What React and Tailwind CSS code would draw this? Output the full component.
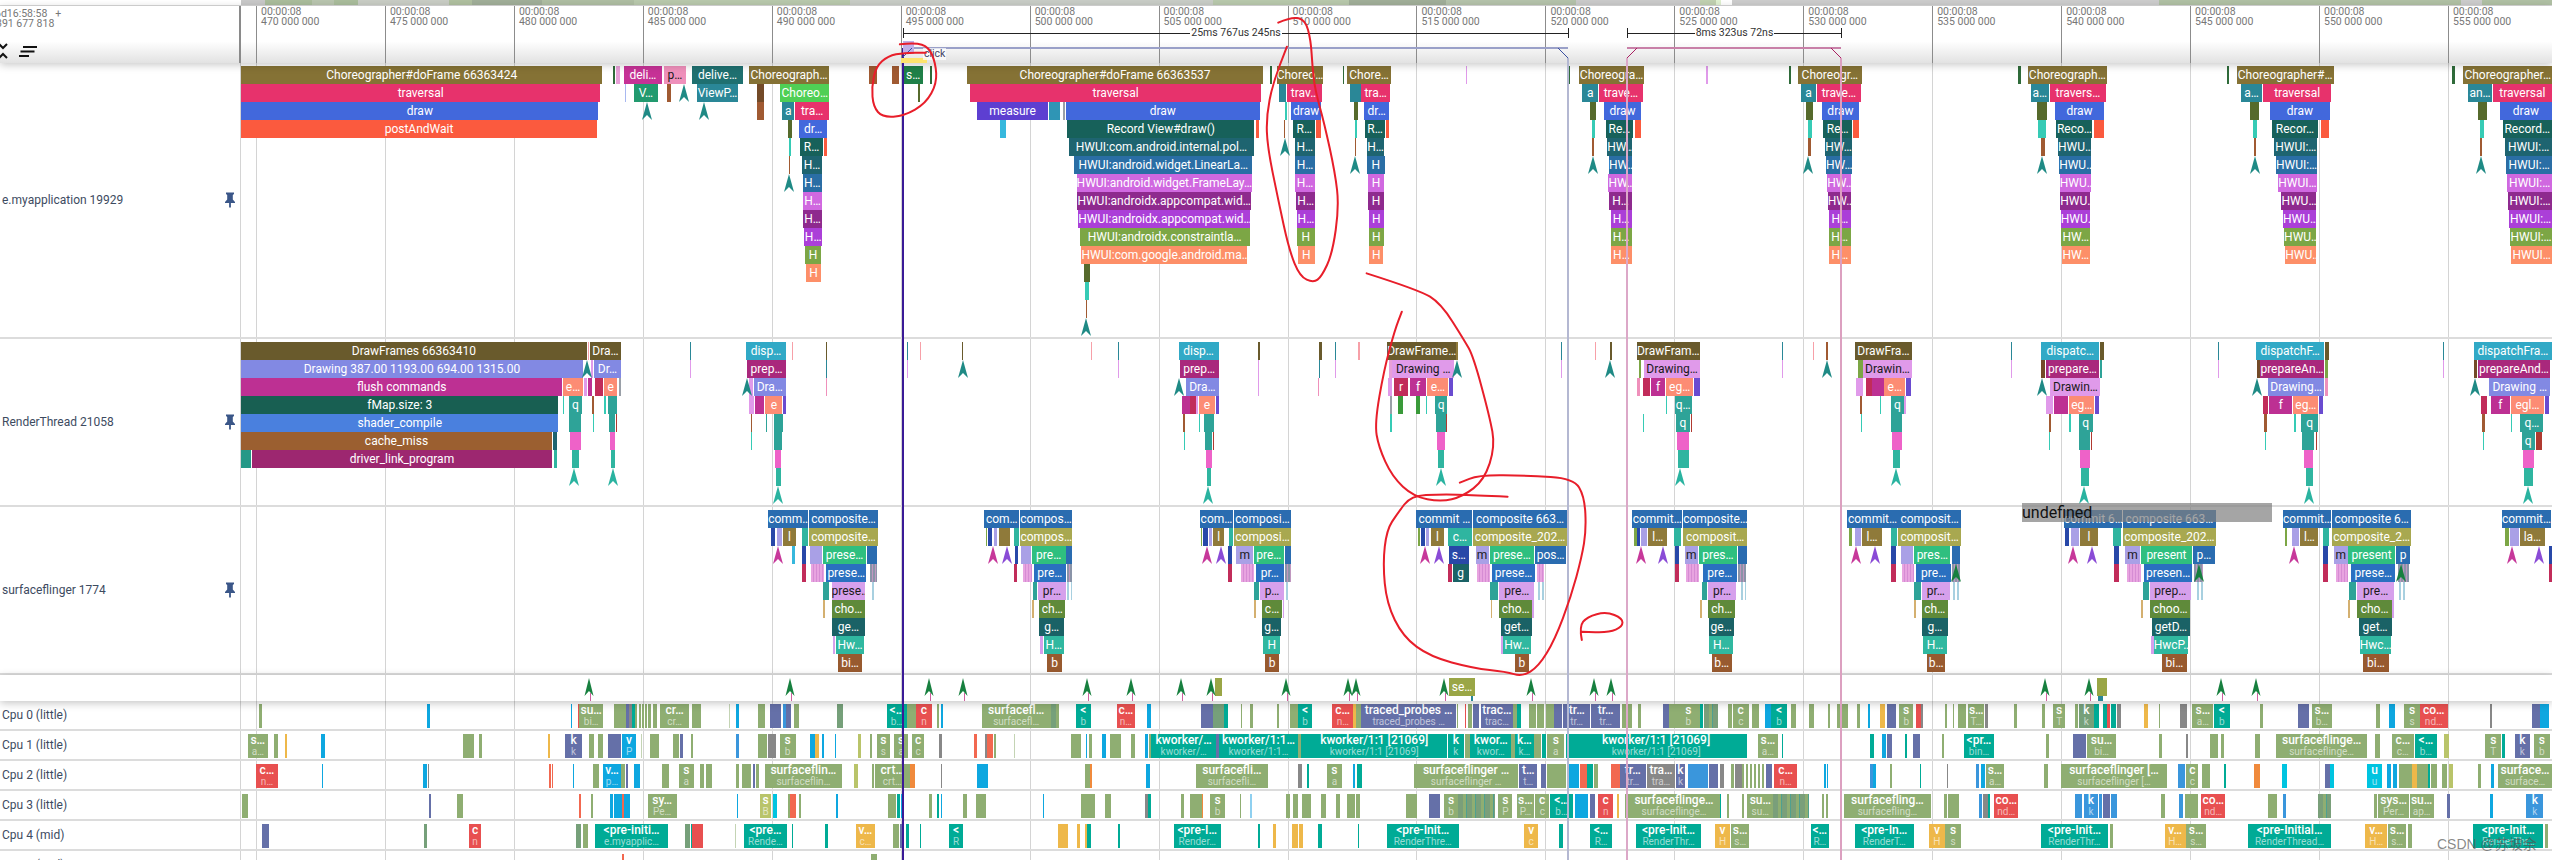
import React from 'react';

const X = (p, z) => {
  if (z > 1568 && p < 2) return X(p + 1, z - 1568);
  return p === 0 ? z / 1.8447 : p === 1 ? 850 + z / 1.8447 : 1700 + z / 1.8404;
};
const LEFT = 241;
const TIMES = [470, 475, 480, 485, 490, 495, 500, 505, 510, 515, 520, 525, 530, 535, 540, 545, 550, 555];

// slice colours
const OL = 'bg-[#857235]', CR = 'bg-[#e7326c]', BL = 'bg-[#4268dc]', OR = 'bg-[#fb5a3e]', GR = 'bg-[#4fcf55]';
const TE = 'bg-[#2a8797]', DT = 'bg-[#17615a]', H1 = 'bg-[#1e6470]', H2 = 'bg-[#2a6ea5]', H3 = 'bg-[#d068e0]';
const H4 = 'bg-[#8e2a8e]', H5 = 'bg-[#ab3fd8]', H6 = 'bg-[#7ca645]', H7 = 'bg-[#fd8f68]', DO = 'bg-[#566a2c]';
const TL = 'bg-[#36cbb5]', BR = 'bg-[#a05a32]', BD = 'bg-[#734a28]', MG = 'bg-[#c63296]', PK = 'bg-[#ef90bb]';
const TD = 'bg-[#1f7070]', VG = 'bg-[#229a6f]', DG = 'bg-[#2f6b3a]', LB = 'bg-[#a8b8f0]', LP = 'bg-[#e8a0d8]';
const PU = 'bg-[#5d3fd1]', SK = 'bg-[#36b8dd]', SG = 'bg-[#1f8048]';
const DF = 'bg-[#695a2c]', DR = 'bg-[#8289e3]', FL = 'bg-[#bd3093]', FM = 'bg-[#185f52]', SC = 'bg-[#4a80de]';
const CM = 'bg-[#9b5f30]', DL = 'bg-[#9d2770]', SA = 'bg-[#fc8c74]', QT = 'bg-[#2ea398]', CY = 'bg-[#31a9c6]';
const PR = 'bg-[#a9287c]', CS = 'bg-[#c12c5a]', LI = 'bg-[#e09aea]', PN = 'bg-[#ee62c8]', RD = 'bg-[#b03a30]';
const QB = 'bg-[#2fb5a0]', TN = 'bg-[#d4b070]', GN = 'bg-[#3a9a3a]', PP = 'bg-[#6a4bd0]', PT = 'bg-[#f7a0a8]';
const CO = 'bg-[#2a6cb0]', CA = 'bg-[#a8a850]', BO = 'bg-[#8f7a3a]', LV = 'bg-[#a9a0e6]', PG = 'bg-[#2fbf7f]';
const PB = 'bg-[#2a70c0]', PL = 'bg-[#d6a0ec]', CG = 'bg-[#5f8a3a]', GT = 'bg-[#1a6266]', HW = 'bg-[#30b8a0]';
const BB = 'bg-[#985a2f]', DB = 'bg-[#2848a8]', GA = 'bg-[#9aa0a8]';
const ST = 'bg-[repeating-linear-gradient(90deg,#e8a4e0_0,#e8a4e0_2px,#d68cd4_2px,#d68cd4_3px)]';
const SL = 'bg-[repeating-linear-gradient(90deg,#8a94a8_0,#8a94a8_2px,#c098c0_2px,#c098c0_3px)]';
const SB = 'bg-[repeating-linear-gradient(90deg,#a8d0e0_0,#a8d0e0_2px,#ffffff_2px,#ffffff_4px)]';
const SM = 'bg-[repeating-linear-gradient(90deg,#bd3093_0,#bd3093_8px,#c12c5a_8px,#c12c5a_14px,#e09aea_14px,#e09aea_16px)]';
const SW = 'bg-[repeating-linear-gradient(90deg,#8fae72_0,#8fae72_2px,#ffffff_2px,#ffffff_4px)]';
const SD = 'bg-[repeating-linear-gradient(90deg,#7a9f7a_0,#7a9f7a_5px,#8fae72_5px,#8fae72_8px,#4fa090_8px,#4fa090_9px)]';

const col = (p, rows) => rows.map(([row, a, b, c, t, d]) => ({ p, row, a, b, c, t, d }));

const APP = [
  ...col(0, [
    [0, 445, 1111, OL, 'Choreographer#doFrame 66363424'], [0, 1130, 1134, DG], [0, 1136, 1143, LP], [0, 1151, 1221, MG, 'deli…'], [0, 1224, 1266, PK, 'p…', 1], [0, 1277, 1370, TD, 'delive…'], [0, 1381, 1530, OL, 'Choreograph…'],
    [1, 445, 1107, CR, 'traversal'], [1, 1153, 1155, LB], [1, 1170, 1213, VG, 'V…'], [1, 1230, 1238, BR], [1, 1286, 1361, TE, 'ViewP…'], [1, 1396, 1410, BD], [1, 1439, 1530, GR, 'Choreo…'],
    [2, 445, 1104, BL, 'draw'], [2, 1396, 1409, BR], [2, 1443, 1465, TE, 'a'], [2, 1467, 1529, CR, 'tra…'],
    [3, 445, 1101, OR, 'postAndWait'], [3, 1453, 1461, DO], [3, 1474, 1526, BL, 'dr…'],
    [4, 1455, 1459, TL], [4, 1476, 1518, DT, 'R…'], [4, 1520, 1526, OR],
    [5, 1455, 1457, BR], [5, 1479, 1517, H1, 'H…'],
    [6, 1481, 1516, H2, 'H…'], [7, 1482, 1516, H3, 'H…'], [8, 1482, 1516, H4, 'H…'], [9, 1484, 1516, H5, 'H…'], [10, 1485, 1515, H6, 'H'], [11, 1486, 1515, H7, 'H'],
  ]),
  ...col(1, [
    [0, 35, 49, BR], [0, 78, 90, BR], [0, 99, 134, SG, 's…'], [0, 148, 151, DG], [0, 216, 762, OL, 'Choreographer#doFrame 66363537'], [0, 775, 778, DG], [0, 787, 873, OL, 'Choreo…'], [0, 909, 911, DG], [0, 917, 998, OL, 'Chore…'], [0, 1136, 1139, LI], [0, 1325, 1329, DG], [0, 1345, 1465, OL, 'Choreogra…'],
    [1, 126, 129, DO], [1, 222, 758, CR, 'traversal'], [1, 791, 805, TE], [1, 806, 871, CR, 'trav…'], [1, 922, 942, TE], [1, 943, 996, CR, 'tra…'], [1, 1351, 1380, TE, 'a'], [1, 1382, 1462, CR, 'trave…'],
    [2, 234, 366, PU, 'measure'], [2, 368, 387, 'bg-[#2f95b5]'], [2, 393, 397, GA], [2, 398, 756, BL, 'draw'], [2, 802, 806, TL], [2, 814, 869, BL, 'draw'], [2, 930, 938, DO], [2, 948, 995, BL, 'dr…'], [2, 1365, 1376, DO], [2, 1391, 1459, BL, 'draw'],
    [3, 276, 288, SK], [3, 401, 746, DT, 'Record View#draw()'], [3, 749, 755, OR], [3, 801, 803, BR], [3, 818, 858, DT, 'R…'], [3, 860, 869, OR], [3, 931, 936, TL], [3, 950, 987, DT, 'R…'], [3, 989, 994, OR], [3, 1368, 1374, TL], [3, 1394, 1445, DT, 'Re…'], [3, 1448, 1459, OR],
    [4, 404, 745, H1, 'HWUI:com.android.internal.pol…'], [4, 820, 858, H1, 'H…'], [4, 932, 934, BR], [4, 953, 986, H1, 'H…'], [4, 1369, 1372, BR], [4, 1397, 1443, H1, 'HW…'],
    [5, 414, 742, H2, 'HWUI:android.widget.LinearLa…'], [5, 821, 858, H2, 'H…'], [5, 954, 986, H2, 'H'], [5, 1400, 1442, H2, 'HW…'],
    [6, 418, 741, H3, 'HWUI:android.widget.FrameLay…'], [6, 821, 858, H3, 'H…'], [6, 955, 986, H3, 'H'], [6, 1399, 1442, H3, 'HW…'],
    [7, 419, 740, H4, 'HWUI:androidx.appcompat.wid…'], [7, 823, 858, H4, 'H…'], [7, 956, 985, H4, 'H'], [7, 1401, 1442, H4, 'H…'],
    [8, 421, 738, H5, 'HWUI:androidx.appcompat.wid…'], [8, 825, 857, H5, 'H…'], [8, 957, 985, H5, 'H'], [8, 1403, 1442, H5, 'H…'],
    [9, 424, 737, H6, 'HWUI:androidx.constraintla…'], [9, 825, 857, H6, 'H'], [9, 957, 985, H6, 'H'], [9, 1403, 1442, H6, 'H…'],
    [10, 427, 732, H7, 'HWUI:com.google.android.ma…'], [10, 826, 857, H7, 'H'], [10, 958, 984, H7, 'H'], [10, 1404, 1442, H7, 'H…'],
    [11, 432, 442, DO], [12, 434, 440, TL], [13, 435, 438, BR],
  ]),
  ...col(2, [
    [0, 11, 15, LI], [0, 163, 167, DG], [0, 180, 298, OL, 'Choreogr…'], [0, 585, 590, DG], [0, 603, 749, OL, 'Choreograph…'], [0, 970, 974, DG], [0, 988, 1166, OL, 'Choreographer#…'], [0, 1384, 1389, DG], [0, 1405, 1568, OL, 'Choreographer…'],
    [1, 186, 213, TE, 'a'], [1, 215, 296, CR, 'trave…'], [1, 609, 642, TE, 'a…'], [1, 644, 747, CR, 'travers…'], [1, 995, 1035, TE, 'a…'], [1, 1036, 1162, CR, 'traversal'], [1, 1413, 1458, TE, 'an…'], [1, 1459, 1568, CR, 'traversal'],
    [2, 196, 208, DO], [2, 224, 293, BL, 'draw'], [2, 620, 639, DO], [2, 653, 744, BL, 'draw'], [2, 1012, 1028, DO], [2, 1049, 1159, BL, 'draw'], [2, 1432, 1449, DO], [2, 1472, 1568, BL, 'draw'],
    [3, 198, 207, TL], [3, 227, 280, DT, 'Re…'], [3, 282, 293, OR], [3, 622, 637, TL], [3, 656, 722, DT, 'Reco…'], [3, 725, 743, OR], [3, 1017, 1025, TL], [3, 1053, 1137, DT, 'Recor…'], [3, 1142, 1158, OR], [3, 1435, 1443, TL], [3, 1477, 1568, DT, 'Record…'],
    [4, 199, 204, BR], [4, 230, 280, H1, 'HW…'], [4, 628, 635, BR], [4, 659, 720, H1, 'HWU…'], [4, 1019, 1023, BR], [4, 1057, 1136, H1, 'HWUI:…'], [4, 1436, 1440, BR], [4, 1482, 1568, H1, 'HWUI:…'],
    [5, 232, 279, H2, 'HW…'], [5, 661, 719, H2, 'HWU…'], [5, 1060, 1135, H2, 'HWUI:…'], [5, 1484, 1568, H2, 'HWUI:…'],
    [6, 234, 278, H3, 'HW…'], [6, 662, 719, H3, 'HWU…'], [6, 1064, 1135, H3, 'HWUI…'], [6, 1486, 1568, H3, 'HWUI:…'],
    [7, 235, 278, H4, 'HW…'], [7, 663, 718, H4, 'HWU…'], [7, 1070, 1134, H4, 'HWU…'], [7, 1487, 1568, H4, 'HWUI:…'],
    [8, 237, 278, H5, 'H…'], [8, 664, 718, H5, 'HWU…'], [8, 1073, 1134, H5, 'HWU…'], [8, 1489, 1568, H5, 'HWUI:…'],
    [9, 237, 277, H6, 'H…'], [9, 665, 718, H6, 'HW…'], [9, 1075, 1133, H6, 'HWU…'], [9, 1491, 1568, H6, 'HWUI:…'],
    [10, 238, 277, H7, 'H…'], [10, 666, 717, H7, 'HW…'], [10, 1077, 1133, H7, 'HWU…'], [10, 1493, 1568, H7, 'HWUI…'],
  ]),
];

const RT = [
  ...col(0, [
    [0, 445, 1082, DF, 'DrawFrames 66363410'], [0, 1084, 1087, PT], [0, 1089, 1145, DF, 'Dra…'], [0, 1272, 1274, TE], [0, 1376, 1450, CY, 'disp…'], [0, 1461, 1463, PT], [0, 1523, 1526, DF],
    [1, 445, 1075, DR, 'Drawing 387.00 1193.00 694.00 1315.00'], [1, 1090, 1094, LI], [1, 1096, 1145, DR, 'Dr…'], [1, 1272, 1274, LI], [1, 1378, 1450, PR, 'prep…'], [1, 1523, 1525, TE],
    [2, 445, 1037, FL, 'flush commands'], [2, 1039, 1075, SA, 'e…'], [2, 1078, 1082, LI], [2, 1085, 1092, FL], [2, 1098, 1113, CS], [2, 1115, 1138, SA, 'e'], [2, 1141, 1145, GA], [2, 1382, 1389, LI], [2, 1390, 1450, DR, 'Dra…'], [2, 1523, 1525, PK],
    [3, 445, 1030, FM, 'fMap.size: 3'], [3, 1038, 1040, TL], [3, 1050, 1073, QT, 'q'], [3, 1092, 1095, BR], [3, 1115, 1118, TL], [3, 1122, 1138, QT], [3, 1382, 1390, LI], [3, 1392, 1410, FL], [3, 1412, 1443, SA, 'e'], [3, 1445, 1450, PP],
    [4, 445, 1030, SC, 'shader_compile'], [4, 1050, 1072, QT], [4, 1093, 1095, TL], [4, 1124, 1135, QT], [4, 1136, 1138, RD], [4, 1385, 1388, BR], [4, 1413, 1415, QT], [4, 1427, 1444, QT],
    [5, 445, 1018, CM, 'cache_miss'], [5, 1020, 1028, H1], [5, 1052, 1071, PN], [5, 1125, 1135, PN], [5, 1386, 1388, TL], [5, 1428, 1442, QT],
    [6, 445, 463, 'bg-[#259887]'], [6, 465, 1018, DL, 'driver_link_program'], [6, 1022, 1028, QB], [6, 1055, 1069, QB], [6, 1127, 1134, QB], [6, 1430, 1441, PN],
    [7, 1431, 1440, QB],
  ]),
  ...col(1, [
    [0, 105, 107, TE], [0, 129, 131, PT], [0, 207, 209, DF], [0, 444, 445, PT], [0, 494, 496, TE], [0, 606, 680, CY, 'disp…'], [0, 752, 756, DF], [0, 865, 870, DF], [0, 895, 897, TE], [0, 938, 940, PT], [0, 991, 1117, DF, 'DrawFrame…'], [0, 1117, 1122, BO], [0, 1311, 1313, TE], [0, 1375, 1377, PT], [0, 1402, 1406, DF], [0, 1451, 1568, DF, 'DrawFram…'],
    [1, 105, 107, LI], [1, 495, 497, LI], [1, 608, 680, PR, 'prep…'], [1, 752, 754, LI], [1, 865, 867, TE], [1, 895, 897, LI], [1, 994, 1000, LP], [1, 1000, 1115, LI, 'Drawing …', 1], [1, 1312, 1314, LI], [1, 1455, 1460, H6], [1, 1465, 1568, LI, 'Drawing…', 1],
    [2, 620, 680, DR, 'Dra…'], [2, 752, 754, LI], [2, 864, 866, PK], [2, 993, 1000, LI], [2, 1003, 1030, CS, 'r'], [2, 1033, 1063, FL, 'f'], [2, 1065, 1104, SA, 'e…'], [2, 1105, 1113, PP], [2, 1452, 1457, PK], [2, 1462, 1475, CS], [2, 1477, 1504, FL, 'f'], [2, 1506, 1555, SA, 'eg…'], [2, 1557, 1568, PP],
    [3, 613, 642, SM], [3, 643, 674, SA, 'e'], [3, 675, 680, PP], [3, 996, 1000, GA], [3, 1010, 1020, GN], [3, 1045, 1051, GN], [3, 1063, 1065, TL], [3, 1079, 1102, QT, 'q'], [3, 1505, 1508, TL], [3, 1521, 1553, QT, 'q…'],
    [4, 615, 618, BR], [4, 643, 645, TL], [4, 653, 672, QT], [4, 997, 999, TL], [4, 1081, 1099, QT], [4, 1100, 1102, RD], [4, 1463, 1465, TL], [4, 1523, 1550, QT, 'q'], [4, 1551, 1553, RD],
    [5, 616, 618, TL], [5, 654, 668, QT], [5, 669, 672, RD], [5, 1083, 1098, PN], [5, 1525, 1548, PN],
    [6, 657, 667, PN], [6, 1085, 1096, QB], [6, 1527, 1547, QB],
    [7, 658, 666, QB],
  ]),
  ...col(2, [
    [0, 150, 152, TE], [0, 208, 210, PT], [0, 231, 236, BR], [0, 285, 390, DF, 'DrawFra…'], [0, 572, 574, TE], [0, 628, 735, CY, 'dispatc…'], [0, 736, 744, DF], [0, 953, 955, TE], [0, 1024, 1148, CY, 'dispatchF…'], [0, 1150, 1158, DF], [0, 1368, 1370, TE], [0, 1424, 1568, CY, 'dispatchFra…'],
    [1, 150, 152, LI], [1, 290, 300, H6], [1, 300, 390, LI, 'Drawin…', 1], [1, 572, 574, LI], [1, 628, 635, BD], [1, 636, 735, PR, 'prepare…'], [1, 736, 740, QT], [1, 954, 956, LI], [1, 1026, 1030, BD], [1, 1031, 1148, PR, 'prepareAn…'], [1, 1150, 1156, H6], [1, 1368, 1370, LI], [1, 1425, 1430, BD], [1, 1431, 1565, PR, 'prepareAnd…'],
    [2, 288, 300, LI], [2, 306, 316, CS], [2, 316, 338, FL], [2, 339, 378, SA, 'e…'], [2, 379, 388, PP], [2, 645, 737, LI, 'Drawin…', 1], [2, 1046, 1148, DR, 'Drawing…'], [2, 1150, 1155, PK], [2, 1452, 1565, DR, 'Drawing …'],
    [3, 295, 299, BR], [3, 331, 333, TL], [3, 352, 375, QT, 'q'], [3, 376, 379, LI], [3, 636, 650, LI], [3, 651, 677, FL], [3, 679, 726, SA, 'eg…'], [3, 727, 735, PP], [3, 1037, 1045, CS], [3, 1048, 1090, FL, 'f'], [3, 1092, 1138, SA, 'eg…'], [3, 1139, 1147, PP], [3, 1438, 1448, CS], [3, 1455, 1491, FL, 'f'], [3, 1493, 1553, SA, 'egl…'], [3, 1555, 1562, PP],
    [4, 296, 298, TL], [4, 351, 372, QT], [4, 642, 646, BR], [4, 680, 682, TL], [4, 697, 723, QT, 'q'], [4, 1038, 1044, BR], [4, 1093, 1096, TL], [4, 1107, 1137, QT, 'q'], [4, 1440, 1444, BR], [4, 1493, 1495, TL], [4, 1510, 1552, QT, 'q…'],
    [5, 354, 371, PN], [5, 643, 645, TL], [5, 698, 718, QT], [5, 719, 722, RD], [5, 1040, 1042, TL], [5, 1108, 1130, QT], [5, 1134, 1136, RD], [5, 1441, 1443, TL], [5, 1512, 1536, QT, 'q'], [5, 1538, 1550, RD],
    [6, 355, 369, QB], [6, 700, 717, PN], [6, 1112, 1129, PN], [6, 1515, 1534, PN],
    [7, 702, 716, QB], [7, 1115, 1128, QB], [7, 1517, 1533, QB],
  ]),
];

const SF = [
  ...col(0, [
    [0, 1417, 1490, CO, 'comm…'], [0, 1492, 1620, CO, 'composite…'],
    [1, 1423, 1430, DB], [1, 1433, 1443, LV], [1, 1445, 1468, BO, 'l'], [1, 1480, 1490, QB], [1, 1492, 1620, CA, 'composite…'],
    [2, 1461, 1466, SK], [2, 1479, 1486, DB], [2, 1494, 1516, LV], [2, 1518, 1598, PG, 'prese…'],
    [3, 1480, 1486, CS], [3, 1496, 1520, ST], [3, 1524, 1598, PB, 'prese…'],
    [4, 1518, 1530, QT], [4, 1534, 1596, PL, 'prese…', 1], [5, 1518, 1522, TN], [5, 1534, 1596, CG, 'cho…'],
    [6, 1535, 1595, GT, 'ge…'], [7, 1536, 1540, PL], [7, 1543, 1593, HW, 'Hw…'], [8, 1546, 1590, BB, 'bi…'],
  ]),
  ...col(1, [
    [2, 32, 50, CO], [3, 37, 50, SL], [4, 41, 48, SB],
    [0, 248, 312, CO, 'com…'], [0, 313, 410, CO, 'compos…'],
    [1, 250, 253, H6], [1, 254, 262, DB], [1, 265, 272, LV], [1, 275, 295, BO], [1, 303, 312, QB], [1, 314, 410, CA, 'compos…'],
    [2, 304, 310, DB], [2, 316, 334, LV], [2, 335, 398, PG, 'pre…'], [2, 399, 410, CO],
    [3, 302, 309, CS], [3, 319, 335, ST], [3, 339, 398, PB, 'pre…'], [3, 400, 410, SL],
    [4, 337, 345, QT], [4, 347, 398, PL, 'pr…', 1], [4, 400, 410, SB], [5, 336, 339, TN], [5, 349, 397, CG, 'ch…'],
    [6, 349, 395, GT, 'g…'], [7, 350, 356, PL], [7, 358, 394, HW, 'H…'], [8, 363, 392, BB, 'b'],
    [0, 645, 707, CO, 'com…'], [0, 708, 814, CO, 'composi…'],
    [1, 647, 650, H6], [1, 651, 660, DB], [1, 662, 668, LV], [1, 670, 690, BO, 'l'], [1, 700, 706, QB], [1, 708, 814, CA, 'composi…'],
    [2, 698, 705, DB], [2, 712, 744, LV, 'm', 1], [2, 745, 800, PG, 'pre…'], [2, 802, 814, CO],
    [3, 698, 704, CS], [3, 722, 745, ST], [3, 749, 800, PB, 'pr…'], [3, 802, 814, SL],
    [4, 746, 755, QT], [4, 757, 800, PL, 'p…', 1], [4, 805, 812, SB], [5, 746, 749, TN], [5, 760, 797, CG, 'c…'], [5, 798, 800, PL],
    [6, 760, 796, GT, 'g…'], [7, 762, 794, HW, 'H'], [8, 766, 791, BB, 'b'],
    [0, 1045, 1148, CO, 'commit …'], [0, 1150, 1322, CO, 'composite 663…'],
    [1, 1048, 1052, H6], [1, 1053, 1060, DB], [1, 1062, 1068, LV], [1, 1072, 1095, BO, 'l'], [1, 1103, 1147, QB, 'c…'], [1, 1150, 1322, CA, 'composite_202…'],
    [2, 1105, 1141, DB, 's…'], [2, 1154, 1178, LV, 'm', 1], [2, 1180, 1262, PG, 'prese…'], [2, 1264, 1321, CO, 'pos…'],
    [3, 1104, 1111, CS], [3, 1112, 1141, GT, 'g'], [3, 1156, 1180, ST], [3, 1185, 1263, PB, 'prese…'], [3, 1267, 1280, ST],
    [4, 1180, 1195, QT], [4, 1198, 1262, PL, 'pre…', 1], [4, 1270, 1282, SB], [5, 1182, 1185, TN], [5, 1198, 1258, CG, 'cho…'], [5, 1259, 1262, PL],
    [6, 1201, 1258, GT, 'get…'], [7, 1200, 1204, PL], [7, 1204, 1256, HW, 'Hw…'], [8, 1226, 1253, BB, 'b'],
    [0, 1443, 1535, CO, 'commit…'], [0, 1537, 1655, CO, 'composite…'],
    [1, 1447, 1451, H6], [1, 1452, 1458, DB], [1, 1460, 1470, LV], [1, 1472, 1508, BO, 'l…'], [1, 1520, 1533, QB], [1, 1537, 1655, CA, 'composit…'],
    [2, 1522, 1530, DB], [2, 1540, 1564, LV, 'm', 1], [2, 1566, 1636, PG, 'pres…'],
    [3, 1522, 1530, CS], [3, 1543, 1566, ST],
  ]),
  ...col(2, [
    [2, 70, 86, CO], [3, 5, 68, PB, 'pre…'], [3, 70, 85, SL], [4, 3, 12, QT], [4, 14, 67, PL, 'pr…', 1], [4, 75, 85, SB], [5, 0, 3, TN], [5, 15, 65, CG, 'ch…'], [6, 16, 62, GT, 'ge…'], [7, 17, 61, HW, 'H…'], [8, 22, 58, BB, 'b…'],
    [0, 271, 364, CO, 'commit…'], [0, 365, 480, CO, 'composit…'],
    [1, 275, 280, H6], [1, 285, 296, LV], [1, 298, 335, BO, 'l…'], [1, 352, 363, QB], [1, 365, 480, CA, 'composit…'],
    [2, 352, 360, DB], [2, 370, 392, LV], [2, 394, 461, PG, 'pres…'], [2, 463, 478, CO],
    [3, 352, 360, CS], [3, 372, 394, ST], [3, 398, 462, PB, 'pre…'], [3, 464, 478, SL],
    [4, 394, 406, QT], [4, 408, 460, PL, 'pr…', 1], [4, 466, 476, SB], [5, 394, 398, TN], [5, 408, 456, CG, 'ch…'],
    [6, 409, 456, GT, 'g…'], [7, 410, 455, HW, 'H…'], [8, 418, 451, BB, 'b…'],
    [0, 670, 776, CO, 'commit 6…'], [0, 778, 950, CO, 'composite 663…'],
    [1, 672, 680, DB], [1, 683, 698, LV], [1, 700, 732, BO, 'l'], [1, 760, 775, QB], [1, 778, 950, CA, 'composite_202…'],
    [2, 762, 772, DB], [2, 782, 810, LV, 'm', 1], [2, 811, 906, PG, 'present'], [2, 908, 947, CO, 'p…'],
    [3, 762, 771, CS], [3, 785, 812, ST], [3, 817, 906, PB, 'presen…'], [3, 910, 925, SL],
    [4, 815, 826, QT], [4, 828, 903, PL, 'prep…', 1], [4, 915, 925, SB], [5, 812, 815, TN], [5, 829, 902, CG, 'choo…'],
    [6, 831, 902, GT, 'getD…'], [7, 830, 835, PL], [7, 835, 899, HW, 'HwcP…'], [8, 850, 896, BB, 'bi…'],
    [0, 1073, 1161, CO, 'commit…'], [0, 1163, 1309, CO, 'composite 6…'],
    [1, 1077, 1081, H6], [1, 1090, 1103, LV], [1, 1105, 1138, BO, 'l…'], [1, 1146, 1158, QB], [1, 1163, 1309, CA, 'composite_2…'],
    [2, 1147, 1156, DB], [2, 1167, 1192, LV, 'm', 1], [2, 1193, 1279, PG, 'present'], [2, 1281, 1307, CO, 'p'],
    [3, 1147, 1155, CS], [3, 1170, 1193, ST], [3, 1199, 1279, PB, 'prese…'], [3, 1284, 1305, SL],
    [4, 1195, 1207, QT], [4, 1210, 1277, PL, 'pre…', 1], [4, 1287, 1297, SB], [5, 1192, 1196, TN], [5, 1210, 1273, CG, 'cho…'], [5, 1274, 1278, PL],
    [6, 1212, 1273, GT, 'get…'], [7, 1214, 1271, HW, 'Hwc…'], [8, 1220, 1268, BB, 'bi…'],
    [0, 1476, 1566, CO, 'commit…'], [1, 1482, 1488, H6], [1, 1490, 1507, LV], [1, 1509, 1555, BO, 'la…'], [2, 1562, 1568, DB], [3, 1562, 1568, CS],
  ]),
];

// chevrons: [panel, row, z, colour]
const A_T = 'fill-[#1f8a85]', A_Q = 'fill-[#2ab3a0]', A_M = 'fill-[#c7389a]', A_P = 'fill-[#8a4bd6]', A_G = 'fill-[#17803f]';
const APP_AR = [[0,1,1261,A_T],[0,2,1193,A_T],[0,2,1299,A_T],[0,6,1456,A_T],[1,4,802,A_T],[1,5,932,A_T],[1,5,1370,A_T],[1,14,436,A_T],[2,5,199,A_T],[2,5,630,A_T],[2,5,1021,A_T],[2,5,1438,A_T]];
const RT_AR = [[0,1,1083,A_T],[0,2,1378,A_T],[0,7,1058,A_Q],[0,7,1130,A_Q],[0,8,1435,A_Q],[1,1,208,A_T],[1,2,607,A_T],[1,1,1119,A_T],[1,1,1402,A_T],[1,7,1090,A_Q],[1,7,1532,A_Q],[1,8,660,A_Q],[2,1,233,A_T],[2,7,360,A_Q],[2,2,630,A_T],[2,8,707,A_Q],[2,2,1026,A_T],[2,8,1121,A_Q],[2,2,1427,A_T],[2,8,1524,A_Q]];
const SF_AR = [[0,2,1435,A_M],[1,2,263,A_M],[1,2,289,A_P],[1,2,658,A_M],[1,2,685,A_P],[1,2,1060,A_M],[1,2,1087,A_P],[1,2,1460,A_M],[1,2,1500,A_P],[2,2,287,A_M],[2,2,322,A_P],[2,3,471,A_G],[2,2,687,A_M],[2,2,722,A_P],[2,3,918,A_G],[2,2,1093,A_M],[2,3,1291,A_G],[2,2,1495,A_M],[2,2,1545,A_P]];
const EXTRA_AR = [[0,1086],[0,1458],[1,146],[1,209],[1,438],[1,518],[1,610],[1,666],[1,805],[1,919],[1,934],[1,1096],[1,1257],[1,1373],[1,1403],[2,635],[2,715],[2,959],[2,1023]];

// CPU
const g = 'bg-[#8fae72]', t = 'bg-[#00ab96]', s = 'bg-[#0ea7e0]', v = 'bg-[#6570a8]', r = 'bg-[#e85050]', y = 'bg-[#eeb84a]', a = 'bg-[#888888]', k = 'bg-[#b9c46a]', c = 'bg-[#00c4e0]', b = 'bg-[#3a96dc]', o = 'bg-[#f08a3c]', e = 'bg-[#f26850]', p = 'bg-[#c4d4b4]', gd = 'bg-[#76a07a]', lb = 'bg-[#8fd0f0]';
const cp = (pn, cpu, list) => list.map(([a1, a2, cc, m, sb]) => ({ p: pn, row: cpu, a: a1, b: a2, c: cc, t: m, sb }));
const CPU = [
  ...cp(0, 0, [[478,483,g],[787,793,s],[1053,1056,s],[1066,1068,r],[1068,1113,g,'su…','bi…'],[1133,1155,g],[1155,1160,v],[1160,1165,a],[1165,1172,t],[1172,1176,g],[1178,1182,g],[1184,1188,g],[1190,1194,g],[1196,1200,g],[1204,1212,g],[1218,1271,g,'cr…','cr…'],[1277,1294,g],[1344,1347,p],[1357,1363,s],[1398,1412,g],[1420,1440,v],[1444,1450,b],[1450,1459,v],[1464,1474,g],[1544,1555,gd]]),
  ...cp(0, 1, [[457,494,g,'s…','a…'],[505,513,g],[525,529,y],[592,600,s],[854,874,g],[884,890,g],[1010,1014,y],[1042,1074,v,'k','k'],[1086,1095,g],[1103,1113,g],[1121,1146,v],[1148,1173,s,'v','P'],[1182,1184,p],[1199,1216,g],[1241,1253,g],[1254,1260,v],[1275,1279,g],[1357,1364,b],[1398,1414,g],[1416,1432,a],[1438,1468,g,'s','b'],[1494,1504,s],[1504,1510,y],[1516,1520,s],[1541,1543,s]]),
  ...cp(0, 2, [[472,513,r,'c…','n…'],[594,596,s],[781,788,s],[790,792,a],[1012,1016,e],[1018,1021,e],[1057,1059,s],[1093,1105,g],[1112,1146,s,'v…','p…'],[1146,1153,g],[1155,1158,v],[1170,1181,s],[1221,1234,g],[1252,1280,g,'s','a'],[1292,1298,g],[1302,1314,g],[1357,1363,g],[1369,1385,g],[1389,1393,v],[1395,1401,g],[1411,1553,g,'surfaceflin…','surfaceflin…']]),
  ...cp(0, 3, [[446,458,g],[792,795,v],[843,854,g],[1069,1071,e],[1091,1094,g],[1125,1130,s],[1133,1148,s],[1148,1151,e],[1151,1163,s],[1195,1248,g,'sy…','Pe…'],[1360,1362,s],[1402,1423,k,'s','B'],[1426,1433,c],[1454,1457,g],[1457,1469,e],[1474,1477,g],[1543,1545,s]]),
  ...cp(0, 4, [[483,497,v],[782,787,gd],[865,888,r,'c','n'],[1062,1071,gd],[1076,1084,g],[1097,1233,t,'<pre-initi…','e.myapplic…'],[1263,1272,gd],[1274,1276,t],[1277,1296,r],[1355,1358,p],[1372,1452,t,'<pre…','Rende…'],[1461,1463,t],[1522,1527,t]]),
  ...cp(0, 5, [[1148,1151,e]]),
  ...cp(1, 0, [[68,105,t,'<…','b…'],[105,121,g],[122,151,r,'c','n'],[161,164,g],[168,172,s],[243,370,g,'surfacefl…','surfacefl…'],[370,380,gd],[380,385,g],[417,444,t,'<','b'],[493,525,r,'c…','n…'],[548,556,s],[647,670,v],[670,690,gd],[690,698,t],[721,724,g],[737,743,g],[788,792,g],[812,826,g],[827,852,t,'<','b'],[890,928,r,'c…','n…'],[928,933,y],[933,943,g],[943,1118,v,'traced_probes …','traced_probes …'],[1120,1122,g],[1134,1137,r],[1140,1148,g],[1150,1160,v],[1164,1223,v,'trac…','trac…'],[1223,1231,g],[1231,1237,t],[1253,1265,g],[1267,1281,g],[1283,1298,g],[1298,1314,v],[1316,1365,v,'tr…','tr…'],[1367,1421,v,'tr…','tr…'],[1424,1443,g],[1453,1459,g],[1500,1510,v],[1510,1525,g],[1525,1568,g,'s','b']]),
  ...cp(1, 1, [[15,20,k],[36,41,g],[49,74,g,'s','s'],[82,107,g,'s','a'],[114,137,g,'c','c'],[164,170,a],[229,234,e],[249,252,a],[252,264,e],[266,269,g],[302,304,p],[408,426,g],[435,438,s],[440,446,g],[464,472,s],[480,500,g],[518,525,g],[545,550,s],[552,556,g],[556,675,t,'kworker/…','kworker/…'],[675,681,v],[681,826,t,'kworker/1:1…','kworker/1:1…'],[826,832,g],[832,1102,t,'kworker/1:1 [21069]','kworker/1:1 [21069]'],[1103,1132,t,'k','k'],[1134,1144,g],[1144,1220,t,'kwor…','kwor…'],[1220,1226,g],[1226,1262,t,'k…','k…'],[1262,1274,g],[1276,1284,t],[1286,1318,g,'s','a'],[1320,1654,t,'kworker/1:1 [21069]','kworker/1:1 [21069]']]),
  ...cp(1, 2, [[8,15,k],[41,44,g],[46,110,g,'crt…','crt…'],[110,120,o],[168,170,a],[234,254,s],[433,442,g],[443,446,o],[546,554,s],[638,771,g,'surfacefli…','surfacefli…'],[826,834,a],[843,847,t],[879,908,g,'s','a'],[927,932,s],[936,944,t],[1040,1233,g,'surfaceflinger …','surfaceflinger …'],[1234,1268,v,'t…','t…'],[1274,1284,v],[1286,1320,g],[1322,1345,s],[1347,1360,e],[1360,1370,t],[1372,1380,g],[1403,1420,e],[1420,1468,v,'tr…','tr…'],[1470,1522,a,'tra…','tra…'],[1524,1540,v,'k','k'],[1545,1568,b]]),
  ...cp(1, 3, [[71,84,g],[87,92,t],[94,99,s],[146,151,g],[161,165,t],[167,170,s],[209,215,g],[232,251,g],[356,358,s],[426,452,g],[470,481,g],[545,550,a],[550,556,t],[611,616,g],[628,650,g],[650,652,o],[665,691,g,'s','b'],[719,722,g],[737,741,lb],[805,812,g],[818,827,g],[833,850,g],[868,879,g],[897,904,g],[917,932,g],[934,941,g],[1026,1046,g],[1068,1072,v],[1072,1088,v],[1096,1122,g,'s','b'],[1122,1190,SD],[1196,1222,g,'s','P'],[1230,1262,g,'s…','P…'],[1264,1290,g,'c','c'],[1292,1333,t,'<…','b…'],[1338,1362,s],[1365,1375,v],[1380,1408,r,'c','n'],[1414,1419,y],[1430,1433,g],[1436,1604,g,'surfaceflinge…','surfaceflinge…']]),
  ...cp(1, 4, [[11,46,y,'v…','c…'],[80,90,g],[92,97,v],[103,108,t],[129,131,t],[182,209,t,'<','R'],[383,402,y],[419,425,y],[433,437,y],[438,445,t],[495,498,t],[597,684,t,'<pre-I…','Render…'],[752,757,t],[780,786,y],[816,826,y],[828,836,y],[863,871,t],[937,939,t],[990,1123,t,'<pre-Init…','RenderThre…'],[1244,1269,y,'v','c'],[1308,1315,t],[1365,1406,t,'<…','R…'],[1450,1570,t,'<pre-Init…','RenderThr…']]),
  ...cp(1, 5, [[38,50,g]]),
  ...cp(2, 0, [[0,5,t],[8,33,SD],[52,58,g],[60,90,g,'c','c'],[96,108,g],[120,131,s],[131,160,t,'<','b'],[168,177,g],[201,210,g],[236,240,g],[252,272,g],[289,294,g],[309,313,s],[331,341,y],[344,361,v],[367,392,g,'s','b'],[398,406,r],[406,410,a],[450,455,g],[465,468,g],[475,490,g],[494,523,g,'s…','T…'],[525,530,a],[578,584,g],[629,635,g],[650,672,g,'s','T'],[690,696,g],[697,725,gd,'k','k'],[725,735,t],[741,749,t],[749,755,r],[756,766,t],[767,775,a],[817,824,y],[844,847,g],[884,896,a],[906,945,g,'s…','a…'],[946,975,t,'<','b'],[1030,1037,g],[1101,1120,v],[1126,1163,g,'s…','b…'],[1244,1252,g],[1268,1280,s],[1296,1325,g,'s','s'],[1325,1376,r,'co…','nd…'],[1454,1458,a],[1531,1546,v],[1546,1562,s]]),
  ...cp(2, 1, [[106,144,g,'s…','a…'],[150,153,t],[313,320,t],[335,343,s],[345,354,v],[377,381,t],[392,404,v],[445,450,g],[486,541,t,'<pr…','bin…'],[636,643,g],[687,710,v],[712,766,g,'su…','bi…'],[844,850,g],[895,898,a],[938,954,g],[959,965,g],[1022,1030,g],[1060,1228,g,'surfaceflinge…','surfaceflinge…'],[1242,1251,g],[1273,1314,g,'c…','c…'],[1316,1356,t,'<…','b…'],[1370,1379,k],[1445,1475,g,'s','T'],[1476,1482,t],[1500,1527,v,'k','k'],[1535,1564,g,'s','b']]),
  ...cp(2, 2, [[0,15,b],[16,34,v],[36,44,a],[57,63,g],[65,77,a],[78,120,SW],[122,132,v],[136,179,r,'c…','n…'],[228,232,s],[233,236,s],[313,318,b],[318,324,s],[350,353,g],[404,407,t],[455,457,a],[508,514,b],[518,525,s],[527,559,g,'s…','a…'],[634,641,g],[664,860,g,'surfaceflinger […','surfaceflinger […'],[880,892,b],[895,917,g,'c','c'],[924,939,g],[964,968,t],[1019,1030,o],[1071,1080,c],[1150,1160,v],[1160,1166,c],[1228,1255,c,'u','u'],[1264,1272,s],[1276,1282,s],[1286,1310,g],[1310,1320,y],[1320,1340,g],[1340,1344,t],[1345,1356,g],[1366,1375,g],[1378,1386,k],[1431,1438,g],[1456,1461,s],[1469,1568,g,'surface…','surface…']]),
  ...cp(2, 3, [[36,38,t],[50,53,g],[77,81,g],[87,135,g,'su…','su…'],[135,200,SD],[225,229,g],[232,236,g],[265,425,g,'surfacefling…','surfacefling…'],[449,454,g],[456,477,g],[513,519,b],[520,530,a],[530,533,t],[541,586,r,'co…','nd…'],[691,703,b],[706,733,b,'k','k'],[735,739,b],[742,755,v],[757,767,b],[848,855,g],[881,889,b],[893,916,g],[922,967,r,'co…','nd…'],[1046,1062,g],[1073,1078,b],[1137,1162,SD],[1240,1246,g],[1248,1305,g,'sys…','Per…'],[1306,1350,g,'su…','ap…'],[1375,1380,v],[1453,1459,s],[1521,1552,b,'k','k']]),
  ...cp(2, 4, [[27,56,y,'v','H'],[57,91,g,'s…','s…'],[204,237,t,'<…','R…'],[285,393,t,'<pre-In…','RenderT…'],[422,450,y,'v','H'],[451,481,g,'s','s'],[627,751,t,'<pre-Init…','RenderThr…'],[755,760,g],[855,894,y,'v…','H…'],[895,931,g,'s…','s…'],[1009,1161,t,'<pre-Initial…','RenderThread…'],[1224,1265,y,'v…','H…'],[1266,1300,g,'s…','s…'],[1303,1311,g],[1423,1552,t,'<pre-Init…','RenderThr…'],[1555,1560,g]]),
];

const OVERVIEW = [
  [445, 'bg-[#ffffff]', 0], [44, 'bg-[#c8c8c8]'], [86, 'bg-[#a9bc9b]'], [41, 'bg-[#b8c4ae]'], [44, 'bg-[#a9bc9b]'], [168, 'bg-[#c8ccc4]'], [43, 'bg-[#afbf9f]'], [129, 'bg-[#a0ae98]'], [170, 'bg-[#aebda2]'], [398, 'bg-[#b8c8ac]'],
  [670, 'bg-[#c8ccc6]'], [250, 'bg-[#b8c8ac]'], [180, 'bg-[#a0ae98]'], [240, 'bg-[#b4c2aa]'], [228, 'bg-[#cacaca]'],
  [30, 'bg-[#c0d0b0]'], [8, 'bg-[#dff0d0]'], [22, 'bg-white'], [785, 'bg-[#cccccc]'], [555, 'bg-[#b0c0a4]'], [40, 'bg-[#cccccc]'], [128, 'bg-[#b0c0a4]'],
];

function Grid() {
  return (
    <div className="absolute inset-0 flex pl-[15px]">
      {TIMES.map((tm) => (
        <div key={tm} className="w-[128.95px] shrink-0 border-l border-[#d4d4d4]" />
      ))}
    </div>
  );
}

function Slices({ data, offset = 3 }) {
  return data.map((d, i) => (
    <div
      key={i}
      className={`absolute h-[18px] overflow-hidden whitespace-nowrap text-center text-[12px] leading-[18px] ${d.c} ${d.d ? 'text-[#1a1a1a]' : 'text-white'}`}
      style={{ left: X(d.p, d.a) - LEFT, width: X(d.p, d.b) - X(d.p, d.a), top: offset + d.row * 18 }}
    >
      {d.t}
    </div>
  ));
}

function CpuSlices({ data, row }) {
  return data.filter((d) => d.row === row).map((d, i) => (
    <div
      key={i}
      className={`absolute top-[3px] flex h-[24px] flex-col items-center overflow-hidden whitespace-nowrap ${d.c}`}
      style={{ left: X(d.p, d.a) - LEFT, width: X(d.p, d.b) - X(d.p, d.a) }}
    >
      {d.t && <span className="text-[12px] font-medium leading-[13px] text-white">{d.t}</span>}
      {d.sb && <span className="text-[10px] leading-[10px] text-white/60">{d.sb}</span>}
    </div>
  ));
}

function Arrows({ data, offset = 3 }) {
  return data.map(([pn, row, z, cl], i) => (
    <svg key={i} width="12" height="18" viewBox="0 0 12 18" className="absolute" style={{ left: X(pn, z) - LEFT - 6, top: offset + row * 18 }}>
      <polygon points="6,0 11,18 6,13 1,18" className={cl} />
    </svg>
  ));
}

function Pin() {
  return (
    <svg width="12" height="16" viewBox="0 0 12 16" className="shrink-0">
      <path d="M2 0.5h8v1.600L8.800 3v4.600L11 10v1H6.900v4.500H5.100V11H1v-1l2.200-2.400V3L2 2.100z" className="fill-[#3a5688]" />
    </svg>
  );
}

function Label({ name, pin = false }) {
  return (
    <div className="flex w-[241px] shrink-0 items-center justify-between border-r border-[#d4d4d4] pl-[2px] pr-[4px] text-[12px] text-[#3d4b5f]">
      <span>{name}</span>
      {pin && <Pin />}
    </div>
  );
}

function Track({ name, pin, height, data, arrows }) {
  return (
    <div className="flex shrink-0 border-b-2 border-[#dcdcdc]" style={{ height }}>
      <Label name={name} pin={pin} />
      <div className="relative flex-1 overflow-hidden">
        <Grid />
        <Slices data={data} />
        <Arrows data={arrows} />
      </div>
    </div>
  );
}

const smooth = (pts) => {
  let d = `M${pts[0][0]} ${pts[0][1]}`;
  for (let i = 1; i < pts.length - 1; i++) {
    const mx = (pts[i][0] + pts[i + 1][0]) / 2;
    const my = (pts[i][1] + pts[i + 1][1]) / 2;
    d += ` Q${pts[i][0]} ${pts[i][1]} ${mx} ${my}`;
  }
  const l = pts[pts.length - 1];
  return `${d} L${l[0]} ${l[1]}`;
};
const up = (pts) => pts.map(([x, yy]) => [850 + x / 1.8447, yy / 3]);
const low = (pts) => pts.map(([x, yy]) => [850 + x / 1.8447, 330 + yy / 3]);

const INK = [
  up([[92,133],[120,128],[145,140],[158,190],[160,250],[140,310],[100,348],[60,352],[43,320],[40,260],[48,200],[70,168],[100,158],[140,158]]),
  up([[790,68],[815,50],[840,60],[850,120],[853,200],[858,270],[875,370],[895,520],[902,620],[890,760],[870,830],[855,848],[830,830],[810,750],[790,600],[770,440],[768,350],[780,250],[806,140]]),
  [...up([[953,820],[1050,870],[1090,910],[1133,1020]]), ...low([[1150,80],[1180,260],[1190,350],[1170,450],[1130,500],[1090,515],[1040,500],[1000,440],[975,350],[968,280],[985,120],[1005,0]]), ...up([[1018,935]])],
  low([[1213,500],[1150,495],[1090,493],[1035,497],[1010,550],[990,600],[983,700],[990,820],[1020,920],[1070,980],[1150,1015],[1210,1025],[1240,1040],[1270,1010],[1300,930],[1330,800],[1350,680],[1358,600],[1355,500],[1335,445],[1250,437],[1160,435],[1125,458]]),
  low([[1350,930],[1345,890],[1360,860],[1395,845],[1425,865],[1425,890],[1400,908],[1350,905]]),
];

function Span({ className, label }) {
  return (
    <div className={`absolute top-[28px] flex h-[10px] items-center border-x border-[#222222] ${className}`}>
      <div className="h-[1px] flex-1 bg-[#222222]" />
      <span className="whitespace-nowrap bg-white px-[1px] text-[10.5px] leading-[12px] text-[#333333]">{label}</span>
      <div className="h-[1px] flex-1 bg-[#222222]" />
    </div>
  );
}

export default function App() {
  return (
    <div className="relative flex h-[860px] w-[2552px] flex-col overflow-hidden bg-white font-['Roboto',sans-serif]">
      {/* overview strip */}
      <div className="flex h-[6px] shrink-0 border-b border-[#d8d8d8]">
        {OVERVIEW.map(([wd, cl], i) => (
          <div key={i} className={`h-[5px] shrink-0 ${cl}`} style={{ width: i < 15 ? wd / 1.8447 : wd / 1.8404 }} />
        ))}
      </div>

      {/* ruler */}
      <div className="relative z-20 flex h-[57px] shrink-0 bg-gradient-to-b from-white from-[62%] to-[#e2e2e2] shadow-[0_2px_8px_rgba(0,0,0,0.22)]">
        <div className="flex w-[241px] shrink-0 flex-col overflow-hidden border-r-2 border-[#8a8a8a] text-[10.5px] leading-[10px] text-[#777777]">
          <div className="-ml-[5px] flex gap-[8px] pt-[3px]"><span>6d16:58:58</span><span>+</span></div>
          <div className="-ml-[4px]">391 677 818</div>
          <div className="mt-[13px] flex items-center gap-[10px]">
            <svg width="10" height="18" viewBox="0 0 10 18" className="-ml-[1px] shrink-0">
              <path d="M0 2l4 4 4-4M0 16l4-4 4 4" className="fill-none stroke-[#111111] stroke-2" />
            </svg>
            <svg width="18" height="11" viewBox="0 0 18 11" className="shrink-0">
              <path d="M4 1h14M1.500 5.500h14M0 10h10" className="fill-none stroke-[#111111] stroke-2" />
            </svg>
          </div>
        </div>
        <div className="flex flex-1 pl-[15px]">
          {TIMES.map((tm) => (
            <div key={tm} className="w-[128.95px] shrink-0 border-l border-[#8c8c8c] pl-[4px] text-[10.5px] leading-[10px] text-[#777777]">
              <div className="whitespace-nowrap pt-[1px]">00:00:08</div>
              <div className="whitespace-nowrap">{tm} 000 000</div>
            </div>
          ))}
        </div>
      </div>

      <Track name="e.myapplication 19929" pin height={276} data={APP} arrows={APP_AR} />
      <Track name="RenderThread 21058" pin height={168} data={RT} arrows={RT_AR} />
      <Track name="surfaceflinger 1774" pin height={168} data={SF} arrows={SF_AR} />

      {/* instants track, last of the pinned group */}
      <div className="relative z-10 flex h-[26px] shrink-0 bg-white shadow-[0_2px_8px_rgba(0,0,0,0.24)]">
        <Label name="" />
        <div className="relative flex-1">
          <Grid />
          <div className="absolute top-[3px] h-[18px] w-[7px] bg-[#9aa646]" style={{ left: X(1, 673) - LEFT }} />
          <div className="absolute top-[3px] h-[18px] w-[26px] overflow-hidden bg-[#9aa646] text-center text-[12px] leading-[18px] text-white" style={{ left: X(1, 1105) - LEFT }}>se…</div>
          <div className="absolute top-[3px] h-[18px] w-[10px] bg-[#9aa646]" style={{ left: X(2, 731) - LEFT }} />
          <div className="absolute top-[21px] h-[5px] w-[5px] bg-[#2a8797]" style={{ left: X(2, 733) - LEFT }} />
          <div className="absolute top-[21px] h-[5px] w-[2px] bg-[#2a8797]" style={{ left: X(1, 1145) - LEFT }} />
          {EXTRA_AR.map(([pn, z], i) => (
            <React.Fragment key={i}>
              <div className="absolute top-[18px] h-[8px] w-[1px] bg-[#d060a0]" style={{ left: X(pn, z) - LEFT + 1 }} />
              <svg width="12" height="18" viewBox="0 0 12 18" className="absolute top-[3px]" style={{ left: X(pn, z) - LEFT - 6 }}>
                <polygon points="6,0 10.500,18 6,13 1.500,18" className={A_G} />
              </svg>
            </React.Fragment>
          ))}
        </div>
      </div>

      {/* CPU tracks */}
      {['Cpu 0 (little)', 'Cpu 1 (little)', 'Cpu 2 (little)', 'Cpu 3 (little)', 'Cpu 4 (mid)', 'Cpu 5 (mid)'].map((nm, i) => (
        <div key={nm} className="flex h-[30px] shrink-0 border-b-2 border-[#dcdcdc]">
          <Label name={nm} />
          <div className="relative flex-1 overflow-hidden">
            <Grid />
            <CpuSlices data={CPU} row={i} />
          </div>
        </div>
      ))}

      {/* flow markers, notes and hand-drawn ink lie over everything */}
      <div className="pointer-events-none absolute inset-0 z-30">
        <div className="absolute top-[48px] bottom-0 left-[902px] w-[2px] bg-[#3a1a96]" />
        <div className="absolute top-[58px] bottom-0 left-[1567px] w-[2px] bg-[#b4b8d2]" />
        <div className="absolute top-[58px] bottom-0 left-[1626px] w-[2px] bg-[#dca8c8]" />
        <div className="absolute top-[58px] bottom-0 left-[1840px] w-[2px] bg-[#dca0c0]" />

        <Span className="left-[903px] w-[666px]" label="25ms 767us 245ns" />
        <Span className="left-[1627px] w-[215px]" label="8ms 323us 72ns" />

        <div className="absolute top-[47px] left-[903px] h-[2px] w-[665px] bg-[#9aa0c8]" />
        <div className="absolute top-[47px] left-[1627px] h-[2px] w-[214px] bg-[#c880a8]" />
        <div className="absolute top-[41px] left-[903px] h-[13px] w-[11px] bg-[#c0b0e8]" />
        <div className="absolute top-[58px] left-[901px] h-[5px] w-[26px] bg-[#fde36e]" />
        <div className="absolute top-[48px] left-[923px] bg-white/70 px-[1px] text-[10.5px] leading-[12px] text-[#444466]">click</div>

        <svg width="2552" height="860" viewBox="0 0 2552 860" className="absolute inset-0">
          <path d="M903 57L912 48M1558 48L1568 58" className="fill-none stroke-[#3a50a0] stroke-1" />
          <path d="M1627 58L1637 48M1831 48L1841 58" className="fill-none stroke-[#a82060] stroke-1" />
          {INK.map((pts, i) => (
            <path key={i} d={smooth(pts)} className="fill-none stroke-[#e81e2a] stroke-2" strokeLinecap="round" />
          ))}
        </svg>

        <div className="absolute top-[503px] left-[2022px] flex h-[19px] w-[250px] items-center bg-[#7f7f7f]/70 text-[16px] leading-[19px] text-[#111111]">undefined</div>

        <div className="absolute top-[834px] left-[2437px] font-['Liberation_Sans','Noto_Sans_CJK_SC',sans-serif] text-[14px] whitespace-nowrap text-[#555555]/70">CSDN @苏坡余</div>
      </div>
    </div>
  );
}
